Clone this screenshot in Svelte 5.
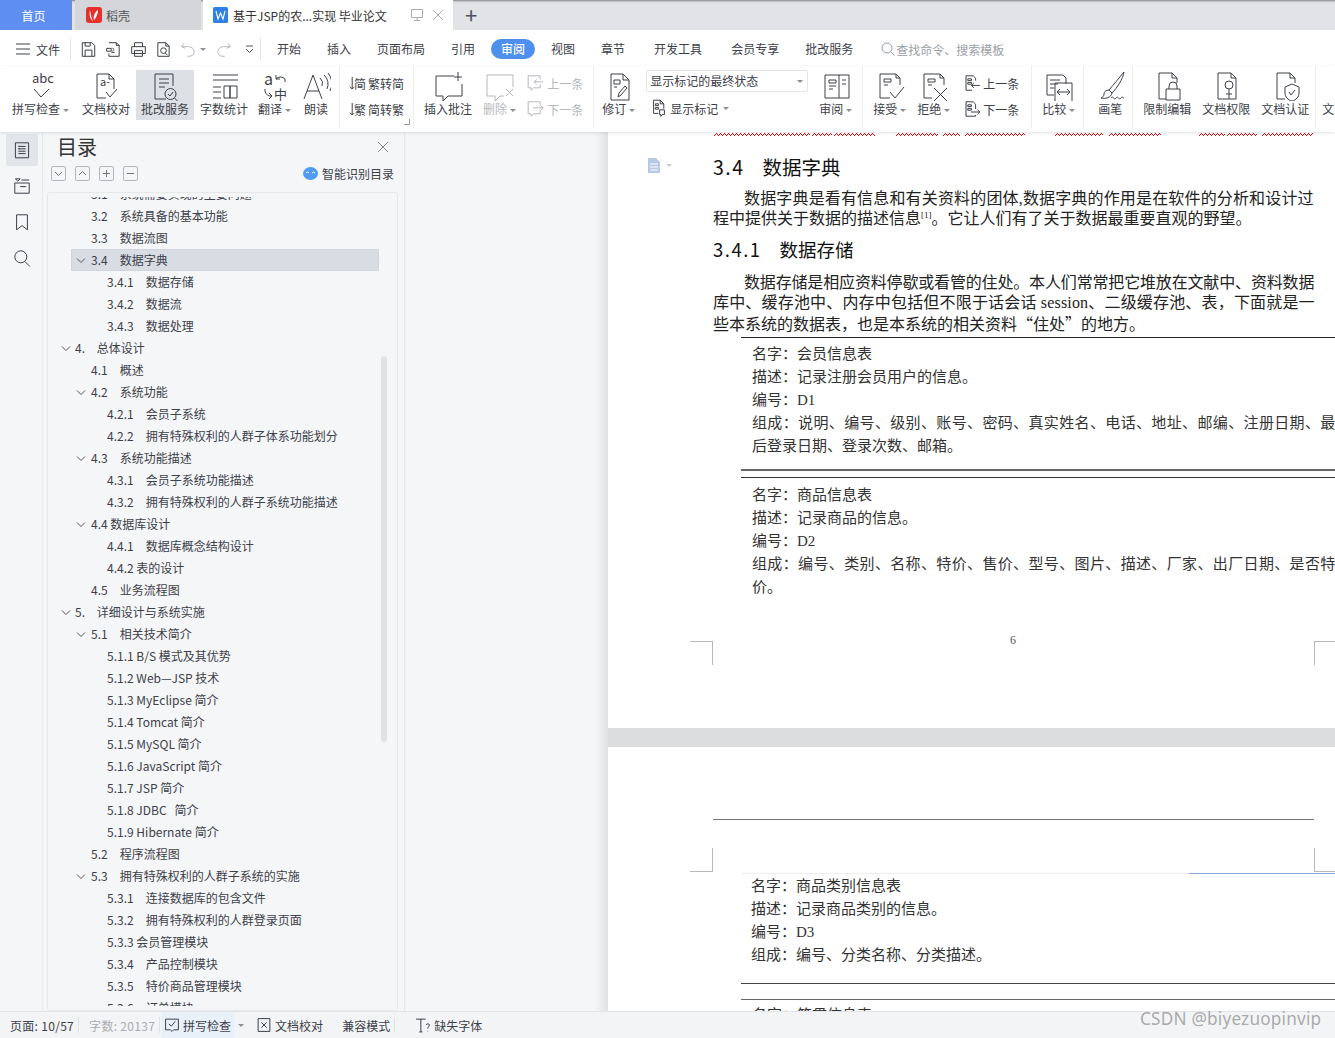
<script>
  const ic = {
    spell: { t: [[6, 12, 13, 'abc']], p: ['M8 18l7 8 8-8'] },
    proof: { t: [[9, 15, 11, 'a-']], p: ['M6 3h12l5 5v10M18 3v5h5M6 3v24h9', 'M15 21l4 5 7-8'] },
    mark: { p: ['M5 3h18v12M5 3v25h11', 'M9 8h10M9 12h10M9 16h6', 'M15 23a5.5 5.5 0 1 0 11 0a5.5 5.5 0 1 0-11 0', 'M18 23l2 2 3-4', 'M24.5 27l3 3'] },
    count: { p: ['M4 4h25M4 9h25', 'M4 16h8M4 21h8M4 27h8', 'M15 15h6v12h-6zM21 15h7v12h-7z'] },
    trans: { t: [[4, 14, 16, 'a'], [14, 28, 13, '中']], p: ['M16 8a6 6 0 0 1 9 0v3M16 4v4h4', 'M5 18v2a6 6 0 0 0 7 5M9 22l3 3-3 3'] },
    read: { p: ['M3 28L12 4l9 24M6 20h12', 'M19 7a7 7 0 0 1 2 8M23 4a12 12 0 0 1 3 14M27 2a16 16 0 0 1 2 18'] },
    toS: { t: [[10, 25, 20, '简']], p: ['M7 5v20M3 21l4 4 3-3'] },
    toT: { t: [[10, 25, 20, '繁']], p: ['M7 5v20M3 21l4 4 3-3'] },
    addc: { p: ['M21 5H3v20h7v5l5-5h14V13', 'M21 6h8M25 1v9'] },
    delc: { p: ['M2 4h26v12M2 4v21h8v5l5-5h4', 'M21 18l7 7M28 18l-7 7'] },
    prevc: { p: ['M2 3h20v6M2 3v20h5v4l4-4h11v-6', 'M27 13H12M16 9l-4 4 4 4'] },
    nextc: { p: ['M2 3h20v6M2 3v20h5v4l4-4h11v-6', 'M10 13h17M23 9l4 4-4 4'] },
    revise: { p: ['M7 3h12l6 6v20H7zM19 3v6h6', 'M10 9h6v4h-6zM10 16h3', 'M14 26l1-4 6-7 2 2-6 7z'] },
    show: { p: ['M6 2h11l6 6v8M17 2v6h6M6 2v22h8', 'M9 8h5v3H9zM9 14h5v3H9z', 'M16 18h8v8h-4l-2 3v-3h-2z'] },
    review: { p: ['M4 4h24v23H4zM18 4v23', 'M8 9h7v3H8zM8 15h7M8 18h4', 'M21 9h4M21 13h4'] },
    accept: { p: ['M5 3h16l4 4v7M21 3v4h4M5 3v24h10', 'M9 8h7v3H9zM9 14h4', 'M15 21l5 6 9-11'] },
    reject: { p: ['M5 3h16l4 4v7M21 3v4h4M5 3v24h8', 'M9 8h7v3H9zM9 14h4', 'M15 17l13 13M28 17L15 30'] },
    prev: { p: ['M5 3h12l4 4v4M5 3v24h10', 'M8 8h6v3H8zM8 14h6v3H8z', 'M28 19H14M18 15l-4 4 4 4'] },
    next: { p: ['M5 3h12l4 4v8M5 3v24h16v-2', 'M8 8h6v3H8zM8 14h6v3H8z', 'M13 20h15M24 16l4 4-4 4'] },
    compare: { p: ['M3 4h16l3 3v6M3 4v20h7', 'M6 9h10M6 13h8M6 17h4', 'M11 12h17v19H11z', 'M14 21h11M16 18l-3 3 3 3M23 18l3 3-3 3'] },
    pen: { p: ['M29 1c-4 5-10 12-15 18l3 3C22 17 28 8 29 1z', 'M14 19c-3 0-5 2-5 4 0 2-1 3-3 4 4 1 10 0 11-5z', 'M16 27c2-3 3 3 5 0s3 3 5 0 2 1 3 0'] },
    lock: { p: ['M7 2h13l5 5v5M20 2v5h5M7 2v26h7', 'M14 18h14v11H14z', 'M17 18v-3a4 4 0 0 1 8 0v3'] },
    perm: { p: ['M7 2h13l5 5v21H7zM20 2v5h5', 'M14 14a4 4 0 1 0 8 0a4 4 0 1 0-8 0M18 18v10M15 23h6'] },
    cert: { p: ['M7 2h13l5 5v5M20 2v5h5M7 2v26h8', 'M22 13l7 3v6c0 4-3 7-7 8-4-1-7-4-7-8v-6z', 'M19 21l2 3 4-5'] },
    save: { p: ['M4 3h17l5 5v19H4z', 'M9 27V16h12v11', 'M9 3v6h9V3'] },
    conv: { p: ['M7 3h13l5 5v19H7v-5M20 3v5h5', 'M3 13h8v5H3zM13 12l3 3-3 3M11 20h6'] },
    print: { p: ['M8 10V3h14v7', 'M3 10h24v12H3z', 'M8 17h14v10H8z'] },
    preview: { p: ['M5 3h14l6 6v18H5zM19 3v6h6', 'M10 17a5 5 0 1 0 10 0a5 5 0 1 0-10 0M18 21l4 4'] },
    undo: { p: ['M7 4L3 10l6 3', 'M3 10h12c6 0 10 4 10 9s-4 8-9 8h-3'] },
    redo: { p: ['M23 4l4 6-6 3', 'M27 10H15C9 10 5 14 5 19s4 8 9 8h3'] },
    tocA: { p: ['M4 3h22v25H4z', 'M9 9h12M9 13h12M9 17h12M9 21h12', 'M9 9h2M9 13h2'] },
    tocB: { p: ['M3 10h24v17H3z', 'M12 3l-4 4-4-4z', 'M14 5h13', 'M12 16h10'] },
    mark2: { p: ['M6 3h18v25l-9-7-9 7z'] },
    find: { p: ['M3 13a10 10 0 1 0 20 0a10 10 0 1 0-20 0M20 21l8 8'] },
    chk: { p: ['M3 4h24v20H18l-3 3-3-3H3z', 'M9 13l5 4 7-9'] },
    docx: { p: ['M4 3h22v24H4z', 'M10 10l10 10M20 10L10 20'] },
    miss: { p: ['M2 4h18M11 4v24M8 28h6', 'M21 15c0-3 6-3 6 0 0 3-3 3-3 7M24 26v1'] }
  };

  const group1 = [
    { i: 'spell', l: '拼写检查', c: 1 },
    { i: 'proof', l: '文档校对', cls: 'push' },
    { i: 'mark', l: '批改服务', cls: 'on' },
    { i: 'count', l: '字数统计' },
    { i: 'trans', l: '翻译', c: 1, cls: 'tight' },
    { i: 'read', l: '朗读', cls: 'tight' }
  ];

  const menu = ['开始', '插入', '页面布局', '引用', '审阅', '视图', '章节', '开发工具', '会员专享', '批改服务'];

  // level, number, title, has chevron
  const toc = [
    [2, '3.1', '系统需要实现的主要问题'],
    [2, '3.2', '系统具备的基本功能'],
    [2, '3.3', '数据流图'],
    [2, '3.4', '数据字典', 1, 1],
    [3, '3.4.1', '数据存储'],
    [3, '3.4.2', '数据流'],
    [3, '3.4.3', '数据处理'],
    [1, '4.', '总体设计', 1],
    [2, '4.1', '概述'],
    [2, '4.2', '系统功能', 1],
    [3, '4.2.1', '会员子系统'],
    [3, '4.2.2', '拥有特殊权利的人群子体系功能划分'],
    [2, '4.3', '系统功能描述', 1],
    [3, '4.3.1', '会员子系统功能描述'],
    [3, '4.3.2', '拥有特殊权利的人群子系统功能描述'],
    [2, '', '4.4 数据库设计', 1],
    [3, '4.4.1', '数据库概念结构设计'],
    [3, '', '4.4.2 表的设计'],
    [2, '4.5', '业务流程图'],
    [1, '5.', '详细设计与系统实施', 1],
    [2, '5.1', '相关技术简介', 1],
    [3, '', '5.1.1 B/S 模式及其优势'],
    [3, '', '5.1.2 Web—JSP 技术'],
    [3, '', '5.1.3 MyEclipse 简介'],
    [3, '', '5.1.4 Tomcat 简介'],
    [3, '', '5.1.5 MySQL 简介'],
    [3, '', '5.1.6 JavaScript 简介'],
    [3, '', '5.1.7 JSP 简介'],
    [3, '', '5.1.8 JDBC\u00a0\u00a0\u00a0简介'],
    [3, '', '5.1.9 Hibernate 简介'],
    [2, '5.2', '程序流程图'],
    [2, '5.3', '拥有特殊权利的人群子系统的实施', 1],
    [3, '5.3.1', '连接数据库的包含文件'],
    [3, '5.3.2', '拥有特殊权利的人群登录页面'],
    [3, '', '5.3.3 会员管理模块'],
    [3, '5.3.4', '产品控制模块'],
    [3, '5.3.5', '特价商品管理模块'],
    [3, '5.3.6', '订单模块']
  ];

  const squiggles = [[106, 96], [204, 20], [226, 41], [288, 42], [335, 17], [357, 60], [447, 48], [501, 52], [591, 26], [619, 30], [654, 51]];

  // spell-check underline, one pixel at a time
  const zigzag = squiggles
    .map(([x, w]) => Array.from({ length: w }, (_, i) => `M${x + i} ${[2, 1, 0, 1][i % 4]}h1v1h-1z`).join(''))
    .join('');
</script>

{#snippet icon(name, size = 30)}
  <svg class="ic" viewBox="0 0 30 30" width={size} height={size} aria-hidden="true">
    {#each ic[name].p as d}<path {d} />{/each}
    {#each ic[name].t ?? [] as [x, y, s, str]}<text {x} {y} font-size={s}>{str}</text>{/each}
  </svg>
{/snippet}

{#snippet caret()}<i class="caret"></i>{/snippet}

{#snippet tool(i, l, c = 0, cls = '')}
  <div class="tool {cls}">
    <div class="tool-ic">{@render icon(i)}</div>
    <div class="tool-l">{l}{#if c}{@render caret()}{/if}</div>
  </div>
{/snippet}

{#snippet mini(i, l, cls = '')}
  <div class="mini {cls}">{@render icon(i, 18)}<span>{l}</span></div>
{/snippet}

<div class="app">
  <header class="tabs">
    <div class="tab home">首页</div>
    <div class="tab shell">
      <svg width="16" height="16" viewBox="0 0 16 16"><rect width="16" height="16" rx="3" fill="#e5312d" /><path d="M4 3c-1 5 0 9 3 11-2-3-2-7-3-11zM12 3c-3 2-5 6-4 10 2-2 4-6 4-10z" fill="#fff" /></svg>
      稻壳
    </div>
    <div class="tab doc">
      <svg width="15" height="16" viewBox="0 0 15 16"><rect width="15" height="16" rx="1.5" fill="#2f7fe8" /><path d="M3 4l2 8 2.5-6 2.5 6 2-8" fill="none" stroke="#fff" stroke-width="1.1" /></svg>
      <span class="doc-name">基于JSP的农...实现 毕业论文</span>
      <svg class="tab-act pin" width="14" height="14" viewBox="0 0 14 14"><path d="M1.5 1.5h11v8h-11zM7 9.5v3M4 12.5h6" /></svg>
      <svg class="tab-act" width="12" height="12" viewBox="0 0 12 12"><path d="M1 1l10 10M11 1L1 11" /></svg>
    </div>
    <div class="plus">+</div>
  </header>

  <nav class="menu">
    <div class="file">
      <svg width="14" height="12" viewBox="0 0 14 12"><path d="M0 1h14M0 6h14M0 11h14" stroke="#3c4049" /></svg>
      文件
    </div>
    <div class="quick">
      {@render icon('save', 17)}
      {@render icon('conv', 17)}
      {@render icon('print', 17)}
      {@render icon('preview', 17)}
      <span class="dim">{@render icon('undo', 17)}</span>
      <i class="caret q"></i>
      <span class="dim">{@render icon('redo', 17)}</span>
      <svg class="more" width="9" height="9" viewBox="0 0 9 9"><path d="M1 1h7M1 4l3.500 3.500L8 4" fill="none" stroke="#555" /></svg>
    </div>
    <div class="menu-items">
      {#each menu as m}
        <span class:active={m === '审阅'} class:far={m === '开发工具' || m === '会员专享'}>{m}</span>
      {/each}
    </div>
    <div class="search">
      <svg width="16" height="16" viewBox="0 0 16 16"><path d="M2 7a5 5 0 1 0 10 0a5 5 0 1 0-10 0M10.500 10.500l4 4" fill="none" stroke="#9aa0aa" /></svg>
      查找命令、搜索模板
    </div>
  </nav>

  <section class="ribbon">
    <div class="grp g1">
      {#each group1 as t}
        {@render tool(t.i, t.l, t.c, t.cls ?? '')}
      {/each}
    </div>
    <div class="grp g2">
      <div class="stack">
        {@render mini('toS', '繁转简')}
        {@render mini('toT', '简转繁')}
      </div>
      <svg class="launch" width="6" height="6" viewBox="0 0 6 6"><path d="M5.500 0v5.500H0" fill="none" stroke="#999" /></svg>
    </div>
    <div class="grp g3">
      {@render tool('addc', '插入批注')}
      {@render tool('delc', '删除', 1, 'off')}
      <div class="stack">
        {@render mini('prevc', '上一条', 'off')}
        {@render mini('nextc', '下一条', 'off')}
      </div>
    </div>
    <div class="grp g4">
      {@render tool('revise', '修订', 1)}
      <div class="stack wide">
        <div class="select">显示标记的最终状态<i class="caret"></i></div>
        <div class="mini show">{@render icon('show', 18)}<span>显示标记</span><i class="caret"></i></div>
      </div>
      {@render tool('review', '审阅', 1)}
    </div>
    <div class="grp g5">
      {@render tool('accept', '接受', 1)}
      {@render tool('reject', '拒绝', 1)}
      <div class="stack">
        {@render mini('prev', '上一条')}
        {@render mini('next', '下一条')}
      </div>
    </div>
    <div class="grp g6">{@render tool('compare', '比较', 1)}</div>
    <div class="grp g7">{@render tool('pen', '画笔', 0, 'narrow')}</div>
    <div class="grp g8">
      {@render tool('lock', '限制编辑')}
      {@render tool('perm', '文档权限')}
      {@render tool('cert', '文档认证')}
    </div>
    <div class="tool-l cut">文</div>
  </section>

  <main class="work">
    <aside class="rail">
      <div class="rail-btn on">{@render icon('tocA', 18)}</div>
      <div class="rail-btn">{@render icon('tocB', 18)}</div>
      <div class="rail-btn">{@render icon('mark2', 18)}</div>
      <div class="rail-btn">{@render icon('find', 18)}</div>
    </aside>

    <aside class="toc">
      <div class="toc-head">
        <h2>目录</h2>
        <svg class="close" width="12" height="12" viewBox="0 0 12 12"><path d="M1 1l10 10M11 1L1 11" /></svg>
      </div>
      <div class="toc-tools">
        <span class="sq"><svg width="13" height="13" viewBox="0 0 13 13"><path d="M3 5l3.500 3.500L10 5" /></svg></span>
        <span class="sq"><svg width="13" height="13" viewBox="0 0 13 13"><path d="M3 8l3.500-3.500L10 8" /></svg></span>
        <span class="sq"><svg width="13" height="13" viewBox="0 0 13 13"><path d="M3 6.500h7M6.500 3v7" /></svg></span>
        <span class="sq"><svg width="13" height="13" viewBox="0 0 13 13"><path d="M3 6.500h7" /></svg></span>
        <div class="smart">
          <svg width="15" height="13" viewBox="0 0 15 13"><ellipse cx="7.500" cy="6.500" rx="7.500" ry="6.500" fill="#4f9bf2" /><path d="M3 6l1.500-1L6 6M9 6l1.500-1L12 6" fill="none" stroke="#fff" /></svg>
          智能识别目录
        </div>
      </div>
      <div class="toc-list">
        <div class="toc-rows">
          {#each toc as [lv, num, title, chev, sel]}
            <div class="row l{lv}" class:sel>
              {#if chev}
                <svg class="chev" width="10" height="6" viewBox="0 0 10 6"><path d="M1 .5l4 4 4-4" /></svg>
              {/if}
              {#if num}<span class="num">{num}</span>{/if}
              <span>{title}</span>
            </div>
          {/each}
        </div>
        <div class="thumb"></div>
      </div>
    </aside>

    <div class="canvas">
      <article class="page p1">
        <svg class="squig" width="727" height="3" shape-rendering="crispEdges"><path d={zigzag} fill="#f00" /></svg>
        <div class="margin-ic">
          <svg width="14" height="15" viewBox="0 0 14 15"><path d="M1 0h8l4 4v11H1z" fill="#b7c9e6" /><path d="M3 6h8M3 9h8M3 12h8" stroke="#fff" /></svg>
          <i class="caret"></i>
        </div>
        <h3 class="h-a"><b>3.4</b>数据字典</h3>
        <p class="line indent s1">数据字典是看有信息和有关资料的团体,数据字典的作用是在软件的分析和设计过</p>
        <p class="line">程中提供关于数据的描述信息<sup>[1]</sup>。它让人们有了关于数据最重要直观的野望。</p>
        <h3 class="h-b"><b>3.4.1</b>数据存储</h3>
        <p class="line indent s2">数据存储是相应资料停歇或看管的住处。本人们常常把它堆放在文献中、资料数据</p>
        <p class="line s3">库中、缓存池中、内存中包括但不限于话会话 session、二级缓存池、表，下面就是一</p>
        <p class="line">些本系统的数据表，也是本系统的相关资料<span class="q">“</span>住处<span class="q">”</span>的地方。</p>

        <div class="dict first">
          <div>名字：会员信息表</div>
          <div>描述：记录注册会员用户的信息。</div>
          <div>编号：D1</div>
          <div class="just">组成：说明、编号、级别、账号、密码、真实姓名、电话、地址、邮编、注册日期、最</div>
          <div>后登录日期、登录次数、邮箱。</div>
        </div>
        <div class="dict second">
          <div>名字：商品信息表</div>
          <div>描述：记录商品的信息。</div>
          <div>编号：D2</div>
          <div class="just">组成：编号、类别、名称、特价、售价、型号、图片、描述、厂家、出厂日期、是否特</div>
          <div>价。</div>
        </div>
        <div class="pageno">6</div>
        <div class="crop bl"></div>
        <div class="crop br"></div>
      </article>

      <article class="page p2">
        <div class="head-rule"></div>
        <div class="crop tl"></div>
        <div class="crop tr"></div>
        <div class="dict third">
          <div>名字：商品类别信息表</div>
          <div>描述：记录商品类别的信息。</div>
          <div>编号：D3</div>
          <div>组成：编号、分类名称、分类描述。</div>
        </div>
        <div class="dict fourth">
          <div>名字：籍贯信息表</div>
        </div>
      </article>
    </div>
  </main>

  <footer class="status">
    <span class="st first-st">页面: 10/57</span>
    <span class="st gray">字数: 20137</span>
    <span class="st spell-st">{@render icon('chk', 16)}拼写检查<i class="caret"></i></span>
    <span class="st proof-st">{@render icon('docx', 16)}文档校对</span>
    <span class="st compat">兼容模式</span>
    <span class="st-last">{@render icon('miss', 16)}缺失字体</span>
  </footer>

  <div class="mark">CSDN @biyezuopinvip</div>
</div>

<style>
  :global(body) {
    margin: 0;
    background: #fff;
  }
  .app {
    position: relative;
    width: 1335px;
    height: 1038px;
    overflow: hidden;
    display: flex;
    flex-direction: column;
    font-family: "Noto Sans CJK SC", "Noto Sans", sans-serif;
    font-size: 12px;
    color: #3c4049;
  }
  .ic {
    display: block;
    flex: none;
  }
  .ic path {
    fill: none;
    stroke: currentColor;
    stroke-width: 1px;
    vector-effect: non-scaling-stroke;
  }
  .ic text {
    fill: currentColor;
    font-family: "Noto Sans CJK SC", sans-serif;
  }
  .caret {
    display: inline-block;
    width: 0;
    height: 0;
    margin-left: 3px;
    vertical-align: middle;
    border: 3px solid transparent;
    border-top: 3px solid #8a8e96;
    border-bottom: 0;
  }

  /* tabs */
  .tabs {
    flex: none;
    height: 30px;
    display: flex;
    background: linear-gradient(#85878b 0, #d8dade 2px, #e1e3e7 4px);
  }
  .tab {
    display: flex;
    align-items: center;
    height: 30px;
    box-sizing: border-box;
  }
  .home {
    width: 72px;
    justify-content: center;
    padding-right: 5px;
    background: #5e8ff0;
    color: #fff;
  }
  .shell {
    width: 126px;
    margin-left: 3px;
    padding-left: 11px;
    gap: 4px;
    background: #d4d6da;
    color: #555;
  }
  .doc {
    width: 250px;
    margin-left: 2px;
    padding-left: 10px;
    background: #fff;
    color: #333;
  }
  .doc-name {
    margin-left: 5px;
    width: 177px;
    white-space: nowrap;
  }
  .tab-act {
    fill: none;
    stroke: #a9adb3;
    margin-left: 8px;
  }
  .pin {
    margin-left: 0;
  }
  .plus {
    margin-left: 12px;
    font-size: 22px;
    line-height: 29px;
    color: #4a5060;
  }

  /* menu row */
  .menu {
    flex: none;
    height: 36px;
    display: flex;
    align-items: center;
    padding-top: 2px;
    box-sizing: border-box;
    background: #fff;
  }
  .file {
    display: flex;
    align-items: center;
    gap: 6px;
    margin-left: 16px;
    width: 54px;
    height: 22px;
    border-right: 1px solid #e3e5e8;
    margin-right: 9px;
  }
  .quick {
    display: flex;
    align-items: center;
    gap: 8px;
    width: 180px;
    height: 22px;
    border-right: 1px solid #e3e5e8;
    margin-right: 16px;
  }
  .quick .dim {
    color: #b5b8bd;
  }
  .caret.q {
    margin-left: -5px;
    margin-right: 1px;
  }
  .more {
    margin-left: 5px;
  }
  .menu-items {
    display: flex;
    align-items: center;
    gap: 26px;
  }
  .menu-items span {
    line-height: 20px;
    white-space: nowrap;
  }
  .menu-items .far {
    margin-left: 3px;
  }
  .menu-items .active {
    background: #4f8fee;
    color: #fff;
    padding: 0 10px;
    margin: 0 -10px;
    border-radius: 10px;
    font-weight: 500;
  }
  .search {
    display: flex;
    align-items: center;
    margin-left: 27px;
    color: #9aa0aa;
  }

  /* ribbon */
  .ribbon {
    flex: none;
    position: relative;
    z-index: 2;
    height: 66px;
    display: flex;
    padding-left: 7px;
    box-sizing: border-box;
    background: #fff;
    box-shadow: 0 1px 3px rgba(0, 0, 0, 0.12);
  }
  .grp {
    position: relative;
    display: flex;
    height: 62px;
    padding: 4px 5px 0;
    box-sizing: border-box;
    gap: 1px;
    border-right: 1px solid #eceef0;
  }
  .g1 {
    padding-left: 0;
    padding-right: 3px;
  }
  .g4 {
    padding-left: 3px;
  }
  .g6 {
    padding-right: 3px;
  }
  .g7 {
    padding-left: 9px;
    padding-right: 5px;
  }
  .g8 {
    padding-right: 1px;
  }
  .tool {
    padding: 0 5px;
    height: 50px;
    display: flex;
    flex-direction: column;
    align-items: center;
    box-sizing: border-box;
    white-space: nowrap;
  }
  .tool.push {
    margin-left: 2px;
  }
  .tool.tight {
    margin-left: -1px;
  }
  .tool.on {
    background: #dde0e4;
  }
  .tool.off {
    color: #b5b8bd;
  }
  .tool.narrow .tool-ic {
    margin: 0 -3px;
  }
  .tool-ic {
    height: 31px;
    display: flex;
    align-items: center;
  }
  .tool-l {
    line-height: 18px;
    margin-top: -1px;
  }
  .stack {
    display: flex;
    flex-direction: column;
    gap: 4px;
    padding-top: 2px;
    margin: 0 5px;
  }
  .g2 .stack {
    margin: 0 4px 0 3px;
  }
  .g5 .stack {
    margin: 0 7px;
  }
  .mini {
    display: flex;
    align-items: center;
    gap: 2px;
    height: 22px;
    white-space: nowrap;
  }
  .mini.off {
    color: #b5b8bd;
  }
  .launch {
    position: absolute;
    right: 3px;
    bottom: 3px;
  }
  .select {
    width: 162px;
    height: 22px;
    box-sizing: border-box;
    border: 1px solid #e3e5e8;
    border-radius: 2px;
    padding-left: 3px;
    line-height: 20px;
    display: flex;
    align-items: center;
    justify-content: space-between;
    padding-right: 4px;
  }
  .stack.wide {
    margin: 0 5px;
    padding-top: 0;
  }
  .show {
    margin-left: 4px;
    margin-top: 1px;
  }
  .cut {
    margin: 34px 0 0 6px;
    white-space: nowrap;
  }

  /* body */
  .work {
    flex: 1;
    min-height: 0;
    display: flex;
  }
  .rail {
    flex: none;
    width: 43px;
    box-sizing: border-box;
    padding: 2px 0 0 6px;
    background: #f5f6f8;
    border-right: 1px solid #e6e8eb;
    display: flex;
    flex-direction: column;
    gap: 4px;
  }
  .rail-btn {
    width: 32px;
    height: 32px;
    border-radius: 2px;
    display: flex;
    align-items: center;
    justify-content: center;
  }
  .rail-btn.on {
    background: #e2e5e9;
  }
  .toc {
    flex: none;
    width: 361px;
    background: #f5f6f8;
    border-right: 1px solid #e6e8eb;
    display: flex;
    flex-direction: column;
  }
  .toc-head {
    height: 30px;
    display: flex;
    align-items: center;
    justify-content: space-between;
    padding: 0 15px 0 14px;
  }
  .toc-head h2 {
    margin: 0;
    font-size: 20px;
    line-height: 30px;
    font-weight: 400;
    color: #333;
  }
  .close {
    fill: none;
    stroke: #888;
  }
  .toc-tools {
    height: 30px;
    display: flex;
    align-items: center;
    gap: 9px;
    padding: 0 10px 7px 8px;
    box-sizing: border-box;
  }
  .sq {
    width: 13px;
    height: 13px;
    border: 1px solid #b3b6bc;
    border-radius: 2px;
    display: flex;
  }
  .sq svg {
    fill: none;
    stroke: #777;
  }
  .smart {
    margin-left: auto;
    display: flex;
    align-items: center;
    gap: 4px;
  }
  .toc-list {
    position: relative;
    flex: 1;
    min-height: 0;
    margin: 0 6px 0 4px;
    overflow: hidden;
    border: 1px solid #e6e8eb;
    border-radius: 3px;
  }
  .toc-list::before,
  .toc-list::after {
    content: "";
    position: absolute;
    z-index: 1;
    left: 0;
    right: 0;
    height: 4px;
    background: #f5f6f8;
  }
  .toc-list::before {
    top: 0;
  }
  .toc-list::after {
    bottom: 0;
  }
  .toc-rows {
    margin: -10px 0 0 23px;
    width: 308px;
  }
  .row {
    position: relative;
    height: 22px;
    line-height: 22px;
    white-space: nowrap;
    box-sizing: border-box;
  }
  .row.sel {
    background: #d8dce3;
    box-shadow: inset 0 0 0 1px #d0d4dc;
  }
  .row.l1 {
    padding-left: 4px;
  }
  .row.l2 {
    padding-left: 20px;
  }
  .row.l3 {
    padding-left: 36px;
  }
  .num {
    display: inline-block;
  }
  .l1 .num {
    width: 19px;
  }
  .l2 .num {
    width: 26px;
  }
  .l3 .num {
    width: 36px;
  }
  .chev {
    position: absolute;
    top: 9px;
    fill: none;
    stroke: #555;
  }
  .l1 .chev {
    left: -10px;
  }
  .l2 .chev {
    left: 5px;
  }
  .thumb {
    position: absolute;
    left: 333px;
    top: 163px;
    width: 6px;
    height: 386px;
    border-radius: 3px;
    background: #dfe1e5;
  }

  /* document */
  .canvas {
    flex: 1;
    min-width: 0;
    overflow: hidden;
    background: linear-gradient(to right, transparent 190px, #e0e1e3 203px) no-repeat, #f5f6f8;
    padding-left: 203px;
  }
  .page {
    position: relative;
    width: 760px;
    background: #fff;
    box-sizing: border-box;
    padding-left: 105px;
    font-family: "Liberation Serif", "Noto Sans CJK SC", serif;
    color: #222;
  }
  .p1 {
    height: 596px;
  }
  .p2 {
    margin-top: 19px;
    height: 300px;
    padding-top: 72px;
  }
  .p2::before {
    content: "";
    position: absolute;
    left: 0;
    right: 0;
    top: -19px;
    height: 19px;
    background: #dcdddf;
  }
  .squig {
    display: block;
    position: absolute;
    left: 0;
    top: 1px;
  }
  .margin-ic {
    position: absolute;
    left: 39px;
    top: 26px;
    display: flex;
    align-items: center;
  }
  .margin-ic .caret {
    border-top-color: #ccc;
    margin-left: 5px;
  }
  h3 {
    margin: 0;
    font-family: "Noto Sans CJK SC", sans-serif;
    font-weight: 400;
    color: #111;
    white-space: nowrap;
  }
  h3 b {
    font-weight: 400;
    letter-spacing: 1.5px;
  }
  .h-a {
    padding-top: 21px;
    font-size: 19.500px;
    line-height: 28px;
  }
  .h-a b {
    margin-right: 18px;
  }
  .h-b {
    margin-top: 6px;
    font-size: 18.500px;
    line-height: 26px;
  }
  .h-b b {
    margin-right: 18px;
  }
  .line {
    margin: 0;
    width: 640px;
    font-size: 16px;
    line-height: 20.400px;
    white-space: nowrap;
  }
  .line .q {
    font-family: "Noto Sans CJK SC", sans-serif;
  }
  .s1 {
    letter-spacing: 0.16px;
  }
  .s2 {
    letter-spacing: -0.16px;
  }
  .s3 {
    letter-spacing: 0.18px;
  }
  .h-a + .line {
    margin-top: 8px;
  }
  .h-b + .line {
    margin-top: 10.700px;
  }
  .indent {
    padding-left: 31px;
  }
  sup {
    font-size: 9px;
    line-height: 0;
  }
  .dict {
    position: relative;
    margin-left: 28px;
    padding-left: 11px;
    font-size: 15px;
    line-height: 23px;
    color: #333;
    white-space: nowrap;
  }
  .just {
    letter-spacing: 0.36px;
  }
  .dict.first {
    margin-top: 0.800px;
    padding-top: 5px;
    padding-bottom: 11px;
    border-top: 1px solid #222;
    border-bottom: 2px solid #666;
  }
  .dict.second {
    margin-top: 6px;
    padding-top: 6px;
    border-top: 1px solid #333;
  }
  .dict.third {
    margin-top: 53px;
    padding-left: 10px;
    padding-top: 1px;
    padding-bottom: 16px;
    border-top: 1px solid #eee;
    border-bottom: 1px solid #444;
  }
  .dict.third::before {
    content: "";
    position: absolute;
    left: 448px;
    right: 0;
    top: -1px;
    height: 1px;
    background: #8aa6d8;
  }
  .dict.fourth {
    margin-top: 15px;
    padding-top: 4px;
    border-top: 1px solid #666;
  }
  .pageno {
    position: absolute;
    left: 402px;
    top: 500px;
    font-size: 12px;
    line-height: 16px;
    color: #555;
  }
  .crop {
    position: absolute;
    width: 23px;
    height: 24px;
    box-sizing: border-box;
    border: 0 solid #b9b9b9;
  }
  .bl {
    left: 82px;
    top: 509px;
    border-width: 1px 1px 0 0;
  }
  .br {
    left: 706px;
    top: 509px;
    border-width: 1px 0 0 1px;
  }
  .tl {
    left: 82px;
    top: 101px;
    border-width: 0 1px 1px 0;
  }
  .tr {
    left: 706px;
    top: 101px;
    border-width: 0 0 1px 1px;
  }
  .head-rule {
    height: 1px;
    width: 601px;
    background: #777;
  }

  /* status bar */
  .status {
    flex: none;
    position: relative;
    z-index: 3;
    height: 27px;
    box-sizing: border-box;
    background: #f3f4f6;
    border-top: 1px solid #e2e4e7;
    display: flex;
    align-items: center;
    padding-left: 10px;
  }
  .st {
    display: flex;
    align-items: center;
    height: 26px;
    padding-right: 5px;
    margin-right: 9px;
    position: relative;
    white-space: nowrap;
  }
  .first-st,
  .gray,
  .compat {
    background: linear-gradient(#dfe1e4, #dfe1e4) right center / 1px 16px no-repeat;
  }
  .first-st,
  .gray {
    letter-spacing: 0.3px;
  }
  .first-st {
    margin-right: 10px;
  }
  .gray {
    color: #a9acb2;
    margin-right: 1px;
  }
  .spell-st {
    padding: 0 0 0 3px;
    width: 73px;
    box-sizing: border-box;
    background: #e8f1fa;
    gap: 3px;
    margin-right: 0;
  }
  .spell-st .caret {
    position: absolute;
    left: 74px;
  }
  .proof-st {
    margin-left: 22px;
    gap: 3px;
    margin-right: 14px;
  }
  .compat {
    margin-right: 20px;
  }
  .st-last {
    display: flex;
    align-items: center;
    gap: 3px;
  }
  .mark {
    position: absolute;
    z-index: 4;
    left: 1140px;
    top: 1006px;
    font-family: "Noto Sans", sans-serif;
    font-size: 17.200px;
    line-height: 26px;
    color: rgba(120, 120, 120, 0.62);
    letter-spacing: 0.2px;
    white-space: nowrap;
  }
</style>
